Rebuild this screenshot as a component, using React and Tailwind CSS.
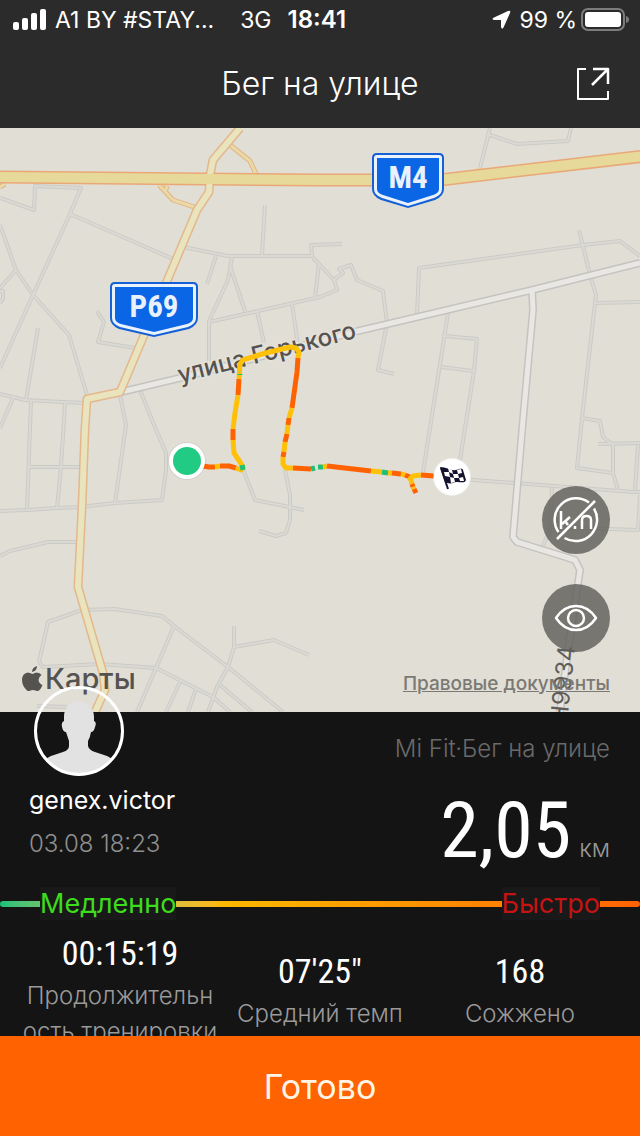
import React from 'react';

const minorRoads = [
  '0,198 34,210 35,186 81,188 70,214 33,295 0,368',
  '70,214 123,237 173,259',
  '0,225 16,270 33,295 69,335 87,395',
  '16,270 0,288',
  '0,291 3,291 3,299 0,303',
  '38,328 26,400',
  '0,394 25,400 63,402 85,403',
  '14,396 0,428',
  '31,401 30,428 27,510',
  '65,402 64,420 61,467 57,508',
  '28,467 80,467',
  '0,511 27,510 57,508 80,507 115,503 162,500 166,470 166,453 152,420 140,390',
  '120,395 126,425 115,503',
  '0,556 10,551 48,542 77,542',
  '39,662 48,622 82,610 115,609 162,616 174,626 228,667 283,712',
  '39,662 43,667 100,664 156,668 213,697 230,712',
  '174,626 156,668 137,712',
  '180,682 166,712',
  '196,689 188,712',
  '234,626 234,647 228,667 217,687 208,712',
  '234,647 274,640 309,655',
  '220,685 252,712',
  '37,706 67,707',
  '242,467 255,500 304,510',
  '285,470 290,495 290,520 286,533 276,536 259,531',
  '183,247 228,256 312,256 311,245 342,244',
  '265,205 262,255',
  '216,256 207,284',
  '232,257 228,280 209,321 209,361',
  '230,266 245,311',
  '209,322 320,297 337,290 334,280 320,265 313,258',
  '319,263 315,298',
  '257,311 264,343',
  '292,304 298,345',
  '334,280 343,273 339,269 351,265 357,280 383,291 387,323 378,370 394,374',
  '97,311 104,322 98,342 135,348',
  '417,315 419,268 583,245 620,241 640,256',
  '579,230 590,275 596,295 595,303 582,418 577,468 613,473',
  '595,303 640,302',
  '582,418 600,421 603,437 613,445 613,473 618,490',
  '598,444 640,443',
  '638,445 635,490',
  '448,313 430,428 423,472',
  '445,336 477,339 474,371 465,428 460,460',
  '441,367 473,371',
  '460,479 633,492 640,492',
  '552,488 550,530 542,548',
  '550,527 638,530 640,495',
  '490,128 480,168',
  '487,134 517,144 568,141 571,128',
];

const streets = [
  '121,392 180,378 358,331 532,290 640,263',
  '532,290 533,310 523,420 513,537 517,542 575,560 580,570 568,650 560,712',
];

const ramps = [
  '230,145 250,161 256,174',
  '159,185 173,200 197,208',
  '167,186 165,192',
  '0,187 5,184',
  '480,168 480,174',
];

const regional =
  '240,128 213,160 210,175 209,192 197,210 167,281 120,392 87,399 85,428 82,507 78,587 103,673 105,690 95,712';
const highway = '-5,177 320,180 440,180 645,156';

const FAST = '#ff6200';
const MID = '#ffc107';
const SLOW = '#1fbf74';

const track = [
  [FAST, '203,466 209,467 215,467'],
  [MID, '215,467 220,466'],
  [FAST, '220,466 229,466 236,468'],
  [MID, '236,468 241,470 243,467 240,462 234,453 233,440'],
  [SLOW, '240,468 245,467'],
  [FAST, '233,440 233,429'],
  [MID, '233,429 235,413 238,395'],
  [FAST, '238,395 239,379'],
  [MID, '239,379 240,364 243,360 262,354 290,347 296,348 299,352 298,358'],
  [SLOW, '240,375 240,374'],
  [FAST, '298,358 297,372 292,408'],
  [MID, '292,408 289,418'],
  [FAST, '289,418 288,425'],
  [MID, '288,425 287,434'],
  [FAST, '287,434 285,442'],
  [MID, '285,442 284,452'],
  [FAST, '284,452 283,457'],
  [MID, '283,457 283,464 286,468 293,468'],
  [FAST, '293,468 311,469'],
  [SLOW, '311,469 315,468'],
  [SLOW, '318,467 323,467'],
  [MID, '323,467 327,466'],
  [FAST, '327,466 371,471'],
  [MID, '371,471 382,472'],
  [SLOW, '382,472 388,473'],
  [MID, '388,473 392,473'],
  [FAST, '392,473 401,474'],
  [MID, '401,474 405,475'],
  [FAST, '405,475 410,477'],
  [MID, '409,477 411,480 412,484'],
  [FAST, '412,484 413,487'],
  [MID, '413,487 414,489'],
  [FAST, '414,489 416,493'],
  [MID, '410,479 413,476 421,475'],
  [FAST, '421,475 434,476'],
];

const stats = [
  { value: '00:15:19', label: ['Продолжительн', 'ость тренировки'] },
  { value: '07\'25"', label: ['Средний темп'] },
  { value: '168', label: ['Сожжено'] },
];

function Lines({ items, color, width }) {
  return items.map((points) => (
    <polyline key={points} points={points} stroke={color} strokeWidth={width} />
  ));
}

function Shield({ x, y, w, label }) {
  const shape = `M5 0H${w - 5}Q${w} 0 ${w} 5V36Q${w} 43 ${w - 9} 47L${w / 2} 55L9 47Q0 43 0 36V5Q0 0 5 0Z`;
  return (
    <g transform={`translate(${x} ${y})`}>
      <path d={shape} fill="#1560d4" />
      <path
        d={`M5 2H${w - 5}Q${w - 2} 2 ${w - 2} 5V36Q${w - 2} 42 ${w - 10} 45L${w / 2} 53L10 45Q2 42 2 36V5Q2 2 5 2Z`}
        fill="#e9f1fc"
      />
      <path
        d={`M5 5H${w - 5}V36Q${w - 5} 40 ${w - 11} 42L${w / 2} 50L11 42Q5 40 5 36Z`}
        fill="#0b66e6"
      />
      <text
        x={w / 2}
        y="35"
        textAnchor="middle"
        fill="#e9f1fc"
        fontSize="31"
        fontWeight="700"
        fontFamily="'Roboto Condensed', 'Liberation Sans Narrow', Roboto, sans-serif"
      >
        {label}
      </text>
    </g>
  );
}

function RouteMap() {
  return (
    <svg
      viewBox="0 128 640 584"
      preserveAspectRatio="xMidYMid slice"
      className="block h-full w-full bg-[#e1ded6]"
      fill="none"
      strokeLinejoin="round"
      role="img"
      aria-label="Карта маршрута"
    >
      <Lines items={minorRoads} color="#cbcbc6" width="4" />
      <Lines items={minorRoads} color="#dbd9d3" width="2" />
      <Lines items={streets} color="#c4c3c0" width="8" />
      <Lines items={streets} color="#e9e7e4" width="5" />
      <Lines items={ramps} color="#e3b47e" width="5" />
      <Lines items={ramps} color="#ead9a8" width="3" />
      <Lines items={[regional]} color="#e3b88c" width="9" />
      <Lines items={[highway]} color="#eaa877" width="13" />
      <Lines items={[regional]} color="#e9e3be" width="6" />
      <Lines items={[highway]} color="#e6d999" width="10" />

      <Shield x={372} y={153} w={72} label="M4" />
      <Shield x={110} y={282} w={88} label="P69" />

      <path id="gorky" d="M180 383L372 334" />
      <text
        fill="#55534f"
        stroke="#e5e2dc"
        strokeWidth="3"
        paintOrder="stroke"
        fontSize="24"
        fontWeight="500"
        fontFamily="Inter, sans-serif"
      >
        <textPath href="#gorky">улица Горького</textPath>
      </text>
      <text
        transform="translate(567 724) rotate(-84)"
        fill="#5f5d59"
        fontSize="24"
        fontFamily="Inter, sans-serif"
      >
        Н9934
      </text>

      {track.map(([color, points]) => (
        <polyline key={points} points={points} stroke={color} strokeWidth="5" />
      ))}

      <circle cx="187" cy="461" r="19" fill="#000" opacity="0.06" />
      <circle cx="187" cy="461" r="18" fill="#fff" />
      <circle cx="187" cy="461" r="14" fill="#22cb83" />

      <circle cx="452" cy="477" r="19" fill="#fff" opacity="0.5" />
      <circle cx="452" cy="477" r="18" fill="#fff" />
      <g>
        <path d="M441 468L448 489" stroke="#14122f" strokeWidth="2" />
        <path
          d="M440 467C447 467 450 471 456 470C460 469 462 468 463 470L466 480C464 485 458 480 453 483C450 484 447 483 445 482Z"
          fill="#14122f"
        />
        <path
          d="M448 468L452 470L453 474L449 472ZM457 470L461 469L462 473L458 474ZM444 472L449 472L450 477L445 476ZM453 474L458 474L459 478L454 478ZM450 477L454 478L455 482L451 483ZM459 478L463 477L464 481L460 481Z"
          fill="#fff"
        />
      </g>
    </svg>
  );
}

function StatusBar() {
  return (
    <div className="flex h-10 items-center pl-[13px] pr-[11px] text-[23px] leading-10">
      <svg width="34" height="22" viewBox="0 0 34 22" fill="#fff" aria-hidden="true">
        <rect x="0" y="13" width="6" height="8" rx="2" />
        <rect x="9" y="9" width="6" height="12" rx="2" />
        <rect x="18" y="4" width="6" height="17" rx="2" />
        <rect x="27" y="0" width="6" height="21" rx="2" />
      </svg>
      <span className="ml-2">A1 BY #STAY...</span>
      <span className="ml-[26px]">3G</span>
      <span className="ml-4 text-2xl/10 font-semibold">18:41</span>
      <svg className="ml-auto" width="20" height="20" viewBox="0 0 20 20" fill="#fff" aria-hidden="true">
        <path d="M17 1Q20 0 19 3L12.500 17.500Q11 20 10 17V10H3Q0 9 3 7.500Z" />
      </svg>
      <span className="ml-2">99 %</span>
      <svg className="ml-1" width="48" height="24" viewBox="0 0 48 24" aria-hidden="true">
        <rect x="1" y="1" width="42" height="21" rx="6" fill="none" stroke="#7c7c7c" strokeWidth="2" />
        <rect x="4" y="4" width="36" height="15" rx="3" fill="#fff" />
        <path d="M45 8Q48 9 48 11.500Q48 14 45 15Z" fill="#7c7c7c" />
      </svg>
    </div>
  );
}

function Header() {
  return (
    <header className="h-32 shrink-0 bg-[#2b2b2b] text-white">
      <StatusBar />
      <div className="grid h-[88px] grid-cols-[1fr_auto_1fr] items-center px-[30px]">
        <h1 className="col-start-2 text-[32px] font-light">Бег на улице</h1>
        <button type="button" aria-label="Поделиться" className="justify-self-end">
          <svg width="36" height="36" viewBox="0 0 36 36" fill="none" stroke="#fff" strokeWidth="2" strokeLinejoin="round">
            <path d="M12 3H4V33H34V25" />
            <path d="M19 3H34V18M33 4L18 19" strokeWidth="2.500" />
          </svg>
        </button>
      </div>
    </header>
  );
}

function MapSection() {
  return (
    <section className="relative aspect-[640/584] w-full shrink-0 overflow-hidden">
      <RouteMap />
      <div className="absolute right-[30px] top-[358px] flex flex-col gap-[30px]">
        <button
          type="button"
          aria-label="Скрыть километры"
          className="flex size-[68px] items-center justify-center rounded-full bg-[#5c5b56]/80"
        >
          <svg width="48" height="48" viewBox="0 0 48 48" fill="none" stroke="#fff" strokeWidth="2.500">
            <path d="M37 6.500A21.500 21.500 0 0 0 6.500 36M12.500 42A21.500 21.500 0 0 0 42 12.500" />
            <path d="M43 5L5 43" />
            <path d="M9 15V33M18 21L10 28M13 25L16 29M23 30V33M30 33V24Q30 20 34.500 20Q39 20 39 24V33" />
          </svg>
        </button>
        <button
          type="button"
          aria-label="Показать карту"
          className="flex size-[68px] items-center justify-center rounded-full bg-[#5c5b56]/80"
        >
          <svg width="44" height="28" viewBox="0 0 44 28" fill="none" stroke="#fff" strokeWidth="2.500">
            <path d="M2 14Q10 2 22 2T42 14Q34 26 22 26T2 14Z" strokeLinejoin="round" />
            <circle cx="22" cy="14" r="8" />
          </svg>
        </button>
      </div>
      <div className="absolute bottom-[13px] left-[22px] flex items-center text-[#55534f]">
        <svg width="21" height="26" viewBox="0 0 21 26" fill="#55534f" aria-hidden="true">
          <path d="M15 0Q15 5 10 6Q10 1.500 15 0Z" />
          <path d="M10.500 8Q12 7 14.500 6.500Q18 6.500 19.500 9Q16.500 11 16.500 14Q17 17.500 20.500 19Q18 25 15.500 25Q14 25 12.500 24.300Q10.500 23.500 8.500 24.500Q6.500 25.500 5 24.500Q0 20 0 13.500Q.5 7 6 6.500Q8.500 7 10.500 8Z" />
        </svg>
        <span className="ml-0.5 text-[29px] font-medium leading-10">Карты</span>
      </div>
      <a
        href="#legal"
        className="absolute bottom-[14px] right-[30px] text-[19px] font-medium text-[#7b7973] underline"
      >
        Правовые документы
      </a>
    </section>
  );
}

function Avatar() {
  return (
    <svg width="90" height="90" viewBox="0 0 90 90" className="ml-[5px] block" role="img" aria-label="genex.victor">
      <clipPath id="face">
        <circle cx="45" cy="45" r="43" />
      </clipPath>
      <path
        clipPath="url(#face)"
        fill="#e2e2e2"
        d="M30 32C29 10 61 10 60 32V35Q63 36 61 41Q60 46 57 46Q56 52 54 55V60Q55 64 61 66L73 70Q80 73 84 80V90H6V80Q10 73 17 70L29 66Q35 64 35 60V55Q34 52 32 46Q29 46 28 41Q27 36 30 35Z"
      />
      <circle cx="45" cy="45" r="43.500" fill="none" stroke="#fff" strokeWidth="3" />
    </svg>
  );
}

function Summary() {
  return (
    <section className="relative bg-[#141414]">
      <div className="flex h-[175px] justify-between pl-[29px] pr-[30px]">
        <div className="-mt-[26px]">
          <Avatar />
          <p className="mt-1.5 text-[25px] leading-9 text-white">genex.victor</p>
          <p className="mt-2 text-2xl leading-9 font-light text-[#8f8f8f]">03.08 18:23</p>
        </div>
        <div className="pt-[19px] text-right">
          <p className="text-2xl leading-9 font-light text-[#6a6a6a]">Mi Fit·Бег на улице</p>
          <p className="mt-6 flex items-baseline justify-end gap-2 leading-[80px]">
            <span className="font-['Roboto_Condensed','Liberation_Sans_Narrow',sans-serif] text-[78px] text-white">
              2,05
            </span>
            <span className="text-2xl font-light text-[#9a9a9a]">км</span>
          </p>
        </div>
      </div>

      <div className="relative flex h-[33px] items-center justify-between px-10 text-[27px] leading-[33px]">
        <div className="absolute inset-x-0 h-1.5 rounded-full bg-linear-to-r from-[#12c07a] via-[#ffb800] via-35% to-[#ff6200]" />
        <span className="relative bg-[#191919] text-[#3ddc1c]">Медленно</span>
        <span className="relative bg-[#191919] text-[#c41414]">Быстро</span>
      </div>

      <dl className="grid grid-cols-3 items-center px-5 pt-2 text-center">
        {stats.map((stat) => (
          <div key={stat.value} className="flex flex-col-reverse">
            <dt className="pb-1 text-2xl leading-9 font-light text-[#9a9a9a]">
              {stat.label.map((line) => (
                <span key={line} className="block whitespace-nowrap">{line}</span>
              ))}
            </dt>
            <dd className="font-['Roboto_Condensed','Liberation_Sans_Narrow',sans-serif] text-[34px] leading-[50px] text-white">
              {stat.value}
            </dd>
          </div>
        ))}
      </dl>
    </section>
  );
}

function App() {
  return (
    <div className="flex h-screen flex-col bg-[#141414] font-['Inter','Noto_Sans',sans-serif]">
      <Header />
      <main className="flex min-h-0 flex-1 flex-col overflow-y-auto [scrollbar-width:none]">
        <MapSection />
        <Summary />
      </main>
      <button type="button" className="h-[100px] shrink-0 bg-[#ff6200] text-[34px] text-[#fff4e6]">
        Готово
      </button>
    </div>
  );
}

export default App;
